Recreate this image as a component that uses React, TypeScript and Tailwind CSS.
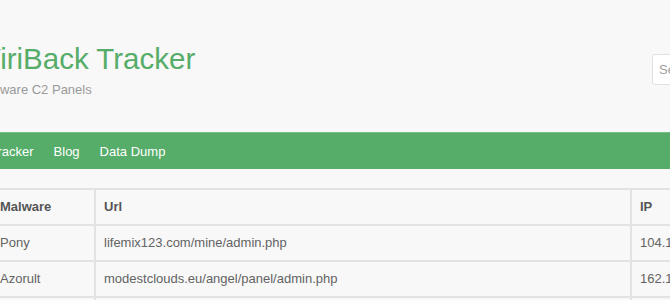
const rows = [
  { malware: 'Pony', url: 'lifemix123.com/mine/admin.php', ip: '104.18.32.47' },
  { malware: 'Azorult', url: 'modestclouds.eu/angel/panel/admin.php', ip: '162.144.13.36' },
  { malware: 'Lokibot', url: 'kbfvzoboss.bid/alien/fre.php', ip: '185.117.88.14' },
];

export default function App() {
  return (
    <div className="h-[300px] w-[670px] overflow-hidden bg-[#f8f8f8] font-['Liberation_Sans',Arial,sans-serif] text-[13px]">
      {/* header */}
      <div className="flex h-[132px] -ml-[20px]">
        <div className="w-[672px] shrink-0 pt-[43px]">
          <h1 className="ml-[1px] text-[29.5px] leading-[32px] text-[#56ad69]">ViriBack Tracker</h1>
          <p className="-ml-[1px] mt-[6px] leading-[18px] text-[#9a9a9a]">Malware C2 Panels</p>
        </div>
        <div className="shrink-0 pt-[54px]">
          <input
            placeholder="Search"
            className="h-[31px] w-[200px] rounded-[3px] border border-[#e0e0e0] bg-white px-[6px] text-[13px] text-[#555] placeholder:text-[#a0a0a0] focus:outline-none"
          />
        </div>
      </div>

      {/* navbar */}
      <nav className="h-[37px] border-t border-[#74c184] bg-[#56ad69]">
        <ul className="-ml-[20px] flex h-full items-center pt-[2px] text-white">
          <li className="px-[10px]">Tracker</li>
          <li className="px-[10px]">Blog</li>
          <li className="px-[10px]">Data Dump</li>
        </ul>
      </nav>

      {/* table */}
      <div className="pt-[19px]">
        <table className="-ml-[10px] w-[780px] border-collapse text-left text-[#636363]">
          <thead>
            <tr>
              <th className="h-[36px] w-[104px] border-2 border-[#e3e3e3] px-[8px] font-bold text-[#555]">Malware</th>
              <th className="h-[36px] w-[536px] border-2 border-[#e3e3e3] px-[8px] font-bold text-[#555]">Url</th>
              <th className="h-[36px] border-2 border-[#e3e3e3] px-[8px] font-bold text-[#555]">IP</th>
            </tr>
          </thead>
          <tbody>
            {rows.map((r) => (
              <tr key={r.url}>
                <td className="h-[36px] border-2 border-[#e3e3e3] px-[8px]">{r.malware}</td>
                <td className="h-[36px] border-2 border-[#e3e3e3] px-[8px]">{r.url}</td>
                <td className="h-[36px] border-2 border-[#e3e3e3] px-[8px]">{r.ip}</td>
              </tr>
            ))}
          </tbody>
        </table>
      </div>
    </div>
  );
}
